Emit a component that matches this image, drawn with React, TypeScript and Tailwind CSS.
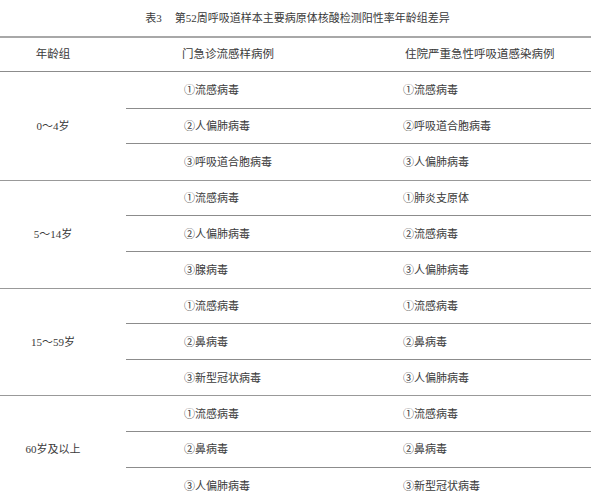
import React from "react";

const groups: { age: string; a: string[]; b: string[] }[] = [
  {
    age: "0～4岁",
    a: ["①流感病毒", "②人偏肺病毒", "③呼吸道合胞病毒"],
    b: ["①流感病毒", "②呼吸道合胞病毒", "③人偏肺病毒"],
  },
  {
    age: "5～14岁",
    a: ["①流感病毒", "②人偏肺病毒", "③腺病毒"],
    b: ["①肺炎支原体", "②流感病毒", "③人偏肺病毒"],
  },
  {
    age: "15～59岁",
    a: ["①流感病毒", "②鼻病毒", "③新型冠状病毒"],
    b: ["①流感病毒", "②鼻病毒", "③人偏肺病毒"],
  },
  {
    age: "60岁及以上",
    a: ["①流感病毒", "②鼻病毒", "③人偏肺病毒"],
    b: ["①流感病毒", "②鼻病毒", "③新型冠状病毒"],
  },
];

function Item({ text }: { text: string }) {
  return (
    <span>
      <span style={{ fontFamily: '"Noto Sans CJK SC", sans-serif' }}>{text.slice(0, 1)}</span>
      {text.slice(1)}
    </span>
  );
}

export default function App() {
  return (
    <div
      className="w-[591px] h-[500px] overflow-hidden bg-white text-[#3a3a3a]"
      style={{ fontFamily: '"Liberation Serif", "Noto Sans CJK SC", serif' }}
    >
      <div className="h-[36px] flex items-center justify-center text-[11px] pl-[4px] pt-[1px]">
        <span>表3</span>
        <span className="ml-[13px]">第52周呼吸道样本主要病原体核酸检测阳性率年龄组差异</span>
      </div>
      <div className="border-t-2 border-[#a8a8a8]">
        <div className="flex h-[34px] items-center border-b border-[#8c8c8c] text-[11.5px]">
          <div className="w-[126px] pr-[20px] text-center">年龄组</div>
          <div className="w-[276px] pl-[56px]">门急诊流感样病例</div>
          <div className="flex-1 pl-[3px]">住院严重急性呼吸道感染病例</div>
        </div>
        {groups.map((g, gi) => (
          <div key={g.age} className="flex border-b border-[#999]">
            <div className="w-[126px] pr-[20px] flex items-center justify-center text-[11px]">
              {g.age}
            </div>
            <div className="flex-1 flex flex-col">
              {g.a.map((item, i) => (
                <div
                  key={i}
                  className={
                    "flex items-center text-[11px] " +
                    (gi === 0 && i === 0 ? "h-[36.6px] " : "h-[35.6px] ") +
                    (i < 2 ? "border-b border-[#8c8c8c]" : "")
                  }
                >
                  <div className="w-[276px] pl-[58px]">
                    <Item text={item} />
                  </div>
                  <div className="flex-1 pl-[1px]">
                    <Item text={g.b[i]} />
                  </div>
                </div>
              ))}
            </div>
          </div>
        ))}
      </div>
    </div>
  );
}
